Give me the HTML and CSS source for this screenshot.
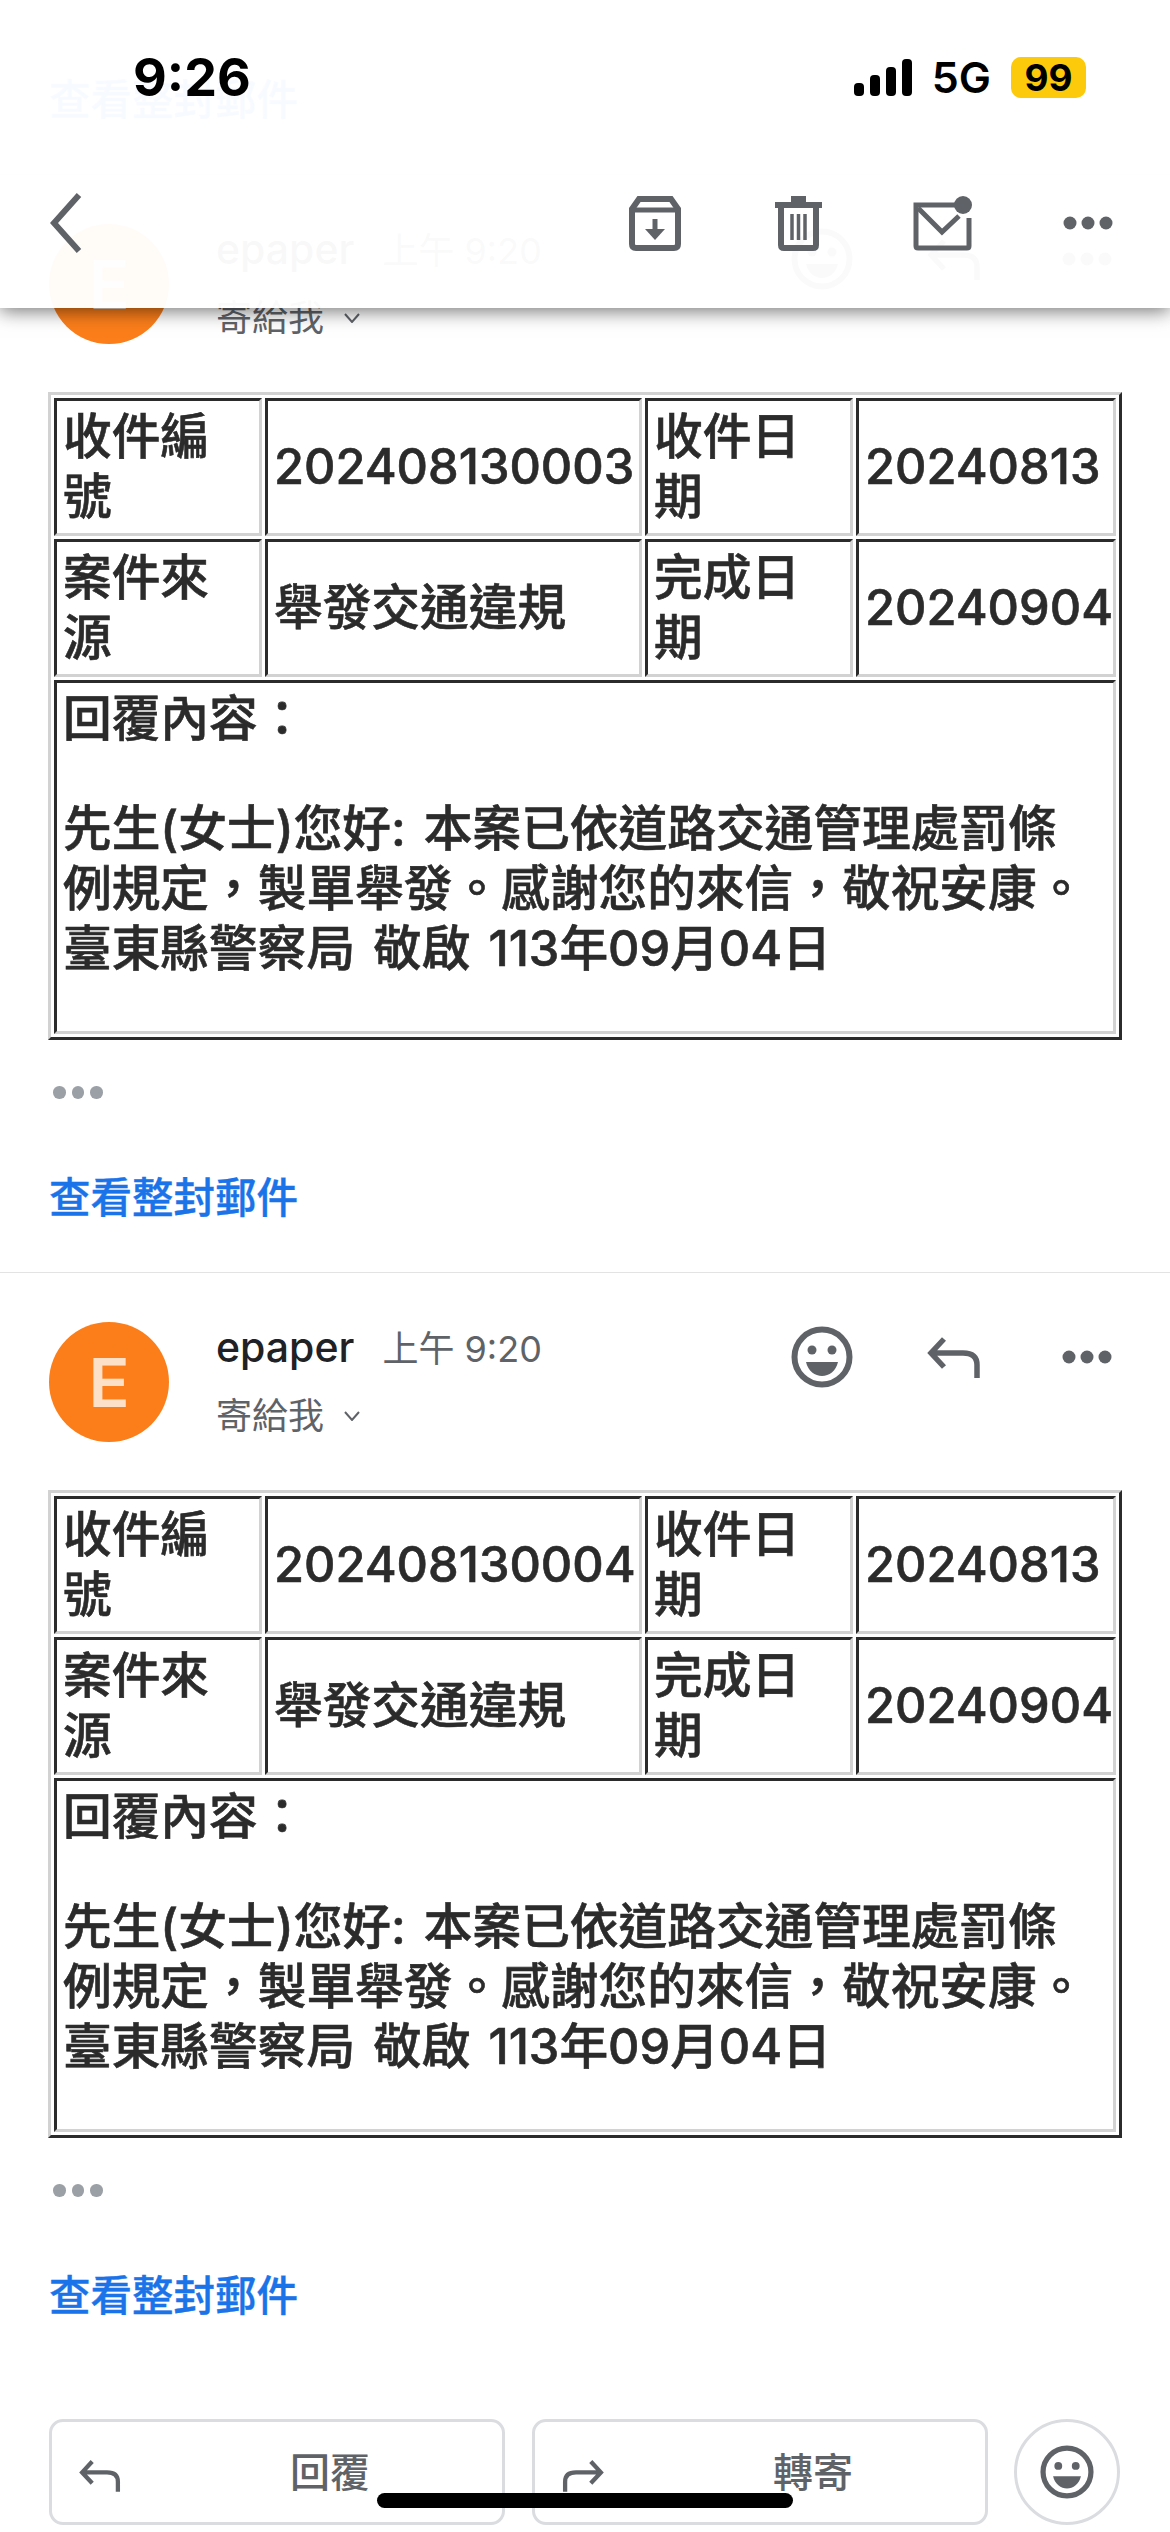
FILE: index.html
```html
<!DOCTYPE HTML>
<html lang="zh-Hant">
<head>
    <meta charset="UTF-8">
    <meta name="viewport" content="width=device-width, initial-scale=1.0">
    <title>epaper</title>
    <link rel="stylesheet" href="styles.css">
</head>
<body>

<svg class="iconDefs" width="0" height="0">
    <symbol id="iconSmile" viewBox="0 0 62 62">
        <circle cx="31" cy="31" r="27.5" fill="none" stroke="currentColor" stroke-width="6"/>
        <circle cx="21" cy="24" r="4.5" fill="currentColor"/>
        <circle cx="41" cy="24" r="4.5" fill="currentColor"/>
        <path d="M15 36H47C45 45 38 50 31 50C24 50 17 45 15 36Z" fill="currentColor"/>
    </symbol>
    <symbol id="iconReply" viewBox="0 0 54 42">
        <path d="M17 3L4 17L17 31M4 17H36Q50 17 50 29V42" fill="none" stroke="currentColor" stroke-width="5.5"/>
    </symbol>
    <symbol id="iconForward" viewBox="0 0 54 42">
        <path d="M37 3L50 17L37 31M50 17H18Q4 17 4 29V42" fill="none" stroke="currentColor" stroke-width="5.5"/>
    </symbol>
    <symbol id="iconMore" viewBox="0 0 50 14">
        <circle cx="7" cy="7" r="6.5" fill="currentColor"/>
        <circle cx="25" cy="7" r="6.5" fill="currentColor"/>
        <circle cx="43" cy="7" r="6.5" fill="currentColor"/>
    </symbol>
</svg>

<div class="feed">
    <a class="fullLink firstLink" href="javascript:;">查看整封郵件</a>

    <div class="message">
        <div class="msgHead">
            <div class="avatar">E</div>
            <div class="sender">
                <div class="senderLine"><span class="senderName">epaper</span><span class="sendTime">上午 9:20</span></div>
                <div class="toLine">寄給我<svg class="toArrow" viewBox="0 0 16 10"><path d="M1 1L8 9L15 1" fill="none" stroke="currentColor" stroke-width="2"/></svg></div>
            </div>
            <div class="msgActions">
                <svg class="iconSmile"><use href="#iconSmile"/></svg>
                <svg class="iconReply"><use href="#iconReply"/></svg>
                <svg class="iconMore"><use href="#iconMore"/></svg>
            </div>
        </div>
        <table class="caseTable">
            <colgroup><col class="colA"><col class="colB"><col class="colC"><col class="colD"></colgroup>
            <tr><td>收件編號</td><td>202408130003</td><td>收件日期</td><td>20240813</td></tr>
            <tr><td>案件來源</td><td>舉發交通違規</td><td>完成日期</td><td>20240904</td></tr>
            <tr><td colspan="4">回覆內容：
                <div class="gapLine"></div>
                先生(女士)您好: 本案已依道路交通管理處罰條<br>例規定，製單舉發。感謝您的來信，敬祝安康。<br>臺東縣警察局 敬啟 113年09月04日
                <div class="gapLine lastGap"></div>
            </td></tr>
        </table>
        <div class="quoteDots"><b></b><b></b><b></b></div>
        <a class="fullLink" href="javascript:;">查看整封郵件</a>
    </div>

    <div class="message">
        <div class="msgHead">
            <div class="avatar">E</div>
            <div class="sender">
                <div class="senderLine"><span class="senderName">epaper</span><span class="sendTime">上午 9:20</span></div>
                <div class="toLine">寄給我<svg class="toArrow" viewBox="0 0 16 10"><path d="M1 1L8 9L15 1" fill="none" stroke="currentColor" stroke-width="2"/></svg></div>
            </div>
            <div class="msgActions">
                <svg class="iconSmile"><use href="#iconSmile"/></svg>
                <svg class="iconReply"><use href="#iconReply"/></svg>
                <svg class="iconMore"><use href="#iconMore"/></svg>
            </div>
        </div>
        <table class="caseTable">
            <colgroup><col class="colA"><col class="colB"><col class="colC"><col class="colD"></colgroup>
            <tr><td>收件編號</td><td>202408130004</td><td>收件日期</td><td>20240813</td></tr>
            <tr><td>案件來源</td><td>舉發交通違規</td><td>完成日期</td><td>20240904</td></tr>
            <tr><td colspan="4">回覆內容：
                <div class="gapLine"></div>
                先生(女士)您好: 本案已依道路交通管理處罰條<br>例規定，製單舉發。感謝您的來信，敬祝安康。<br>臺東縣警察局 敬啟 113年09月04日
                <div class="gapLine lastGap"></div>
            </td></tr>
        </table>
        <div class="quoteDots"><b></b><b></b><b></b></div>
        <a class="fullLink" href="javascript:;">查看整封郵件</a>
    </div>

    <div class="bottomBtns">
        <div class="bottomBtn"><svg class="btnIcon"><use href="#iconReply"/></svg><span class="btnText">回覆</span></div>
        <div class="bottomBtn"><svg class="btnIcon"><use href="#iconForward"/></svg><span class="btnText">轉寄</span></div>
        <div class="bottomRound"><svg class="iconRound"><use href="#iconSmile"/></svg></div>
    </div>
</div>

<div class="topBar">
    <div class="statusBar">
        <span class="clock">9:26</span>
        <div class="statusRight">
            <svg class="signal" viewBox="0 0 58 37">
                <rect x="0" y="24" width="10" height="13" rx="4"/>
                <rect x="16" y="16" width="10" height="21" rx="4"/>
                <rect x="32" y="8" width="10" height="29" rx="4"/>
                <rect x="48" y="0" width="10" height="37" rx="4"/>
            </svg>
            <span class="netType">5G</span>
            <span class="battery">99</span>
        </div>
    </div>
    <div class="toolBar">
        <svg class="iconBack" viewBox="0 0 32 60"><path d="M29 2L4 30L29 58" fill="none" stroke="currentColor" stroke-width="6"/></svg>
        <div class="toolIcons">
            <svg class="iconArchive" viewBox="0 0 52 55">
                <path d="M10 3H42L49 13V48Q49 52 45 52H7Q3 52 3 48V13Z" fill="none" stroke="currentColor" stroke-width="6"/>
                <path d="M3 14H49" stroke="currentColor" stroke-width="5"/>
                <path d="M26 23V37" stroke="currentColor" stroke-width="5"/>
                <path d="M16 33H36L26 44Z" fill="currentColor"/>
            </svg>
            <svg class="iconTrash" viewBox="0 0 47 55">
                <path d="M0 6H47V12H0ZM16 0H31V6H16Z" fill="currentColor"/>
                <path d="M6 12V49Q6 52 9 52H38Q41 52 41 49V12" fill="none" stroke="currentColor" stroke-width="6"/>
                <path d="M17 18V44M23.500 18V44M30 18V44" stroke="currentColor" stroke-width="3.500"/>
            </svg>
            <svg class="iconMail" viewBox="0 0 59 55">
                <path d="M42 9H3V50Q3 52 5 52H54Q56 52 56 50V22" fill="none" stroke="currentColor" stroke-width="5"/>
                <path d="M5 12L29 36L46 20" fill="none" stroke="currentColor" stroke-width="5"/>
                <circle cx="50" cy="9" r="9" fill="currentColor"/>
            </svg>
            <svg class="iconMore"><use href="#iconMore"/></svg>
        </div>
    </div>
</div>

<div class="homeBar"></div>

</body>
</html>
```

FILE: styles.css
```css
html, body {
    margin: 0;
    padding: 0;
}
body {
    position: relative;
    width: 1170px;
    height: 2532px;
    overflow: hidden;
    background: #fff;
    font-family: Inter, "Noto Sans CJK TC", sans-serif;
    color: #2b2b2b;
}
.iconDefs {
    position: absolute;
}
.feed {
    display: flex;
    flex-direction: column;
}
.fullLink {
    display: block;
    margin-left: 49px;
    height: 60px;
    font-size: 41.5px;
    line-height: 60px;
    font-weight: 500;
    -webkit-text-stroke: .4px #1a73e8;
    color: #1a73e8;
    text-decoration: none;
}
.firstLink {
    margin-top: 70px;
}
.message {
    margin-top: 44px;
    padding-top: 49px;
    border-top: 1px solid #e3e3e3;
}
.msgHead {
    display: flex;
    align-items: flex-start;
    height: 120px;
    padding: 0 58px 0 49px;
}
.avatar {
    width: 120px;
    height: 120px;
    flex: none;
    border-radius: 50%;
    background: #fb7e1a;
    color: #fde0c8;
    font-size: 68px;
    line-height: 120px;
    font-weight: 600;
    text-align: center;
}
.sender {
    flex: 1;
    margin-left: 47px;
}
.senderLine {
    display: flex;
    align-items: baseline;
    height: 50px;
    line-height: 50px;
}
.senderName {
    font-size: 41px;
    font-weight: 500;
    color: #202124;
}
.sendTime {
    margin-left: 28px;
    font-size: 36px;
    color: #5f6368;
}
.toLine {
    display: flex;
    align-items: center;
    height: 50px;
    margin-top: 19px;
    font-size: 36px;
    line-height: 50px;
    color: #5f6368;
}
.toArrow {
    width: 16px;
    height: 10px;
    margin-left: 20px;
}
.msgActions {
    display: flex;
    align-items: center;
    height: 70px;
    color: #5f6368;
}
.iconSmile {
    width: 62px;
    height: 62px;
}
.iconReply {
    width: 54px;
    height: 42px;
    margin-left: 74px;
}
.iconMore {
    width: 50px;
    height: 14px;
    margin-left: 81px;
}
.caseTable {
    width: 1074px;
    margin: 48px 0 0 48px;
    table-layout: fixed;
    border-collapse: separate;
    border-spacing: 3px;
    border: 3px solid;
    border-color: #d2d2d2 #2b2b2b #2b2b2b #d2d2d2;
    font-size: 48.7px;
    line-height: 60px;
    font-weight: 500;
    word-spacing: 5px;
    -webkit-text-stroke: .6px #2b2b2b;
    color: #2b2b2b;
}
.colA { width: 208px; }
.colB { width: 377px; }
.colC { width: 208px; }
.colD { width: 260px; }
.caseTable td {
    padding: 6px;
    border: 3px solid;
    border-color: #2b2b2b #d2d2d2 #d2d2d2 #2b2b2b;
    overflow: hidden;
}
.gapLine {
    height: 50px;
}
.lastGap {
    height: 46px;
}
.quoteDots {
    display: flex;
    gap: 6px;
    margin: 46px 0 0 53px;
    height: 12px;
}
.quoteDots b {
    width: 12.500px;
    height: 12.500px;
    border-radius: 50%;
    background: #9aa0a6;
}
.quoteDots + .fullLink {
    margin-top: 70px;
}
.bottomBtns {
    display: flex;
    margin: 93px 49px 0 49px;
    height: 106px;
    color: #5f6368;
}
.bottomBtn {
    position: relative;
    box-sizing: border-box;
    width: 456px;
    margin-right: 27px;
    padding: 0 0 4px 106px;
    display: flex;
    align-items: center;
    justify-content: center;
    border: 3px solid #dadce0;
    border-radius: 14px;
}
.btnIcon {
    position: absolute;
    left: 27px;
    top: 37px;
    width: 42px;
    height: 33px;
}
.btnText {
    font-size: 40px;
    font-weight: 500;
}
.bottomRound {
    box-sizing: border-box;
    width: 106px;
    height: 106px;
    margin-left: -1px;
    display: flex;
    align-items: center;
    justify-content: center;
    border: 3px solid #dadce0;
    border-radius: 50%;
}
.iconRound {
    width: 54px;
    height: 54px;
}
.topBar {
    position: absolute;
    left: 0;
    top: 0;
    width: 1170px;
    height: 308px;
    background: rgba(255,255,255,.97);
    box-shadow: 0 3px 18px rgba(0,0,0,.55);
}
.statusBar {
    display: flex;
    justify-content: space-between;
    align-items: center;
    height: 41px;
    padding: 57px 84px 0 133px;
    color: #000;
}
.clock {
    font-size: 52px;
    font-weight: 700;
    line-height: 41px;
}
.statusRight {
    display: flex;
    align-items: center;
}
.signal {
    width: 58px;
    height: 37px;
    fill: #000;
}
.netType {
    margin-left: 20px;
    font-size: 43px;
    font-weight: 600;
    line-height: 41px;
}
.battery {
    width: 75px;
    height: 41px;
    margin-left: 20px;
    border-radius: 10px;
    background: #fcc90b;
    font-size: 37px;
    font-weight: 700;
    line-height: 41px;
    text-align: center;
    color: #000;
}
.toolBar {
    display: flex;
    justify-content: space-between;
    align-items: center;
    height: 64px;
    margin-top: 93px;
    padding: 0 57px 0 50px;
    color: #5f6368;
}
.iconBack {
    width: 32px;
    height: 60px;
}
.toolIcons {
    display: flex;
    align-items: center;
}
.iconArchive {
    width: 52px;
    height: 55px;
}
.iconTrash {
    width: 47px;
    height: 55px;
    margin-left: 94px;
}
.iconMail {
    width: 59px;
    height: 55px;
    margin-left: 91px;
}
.toolIcons .iconMore {
    margin-left: 91px;
}
.homeBar {
    position: absolute;
    left: 377px;
    top: 2493px;
    width: 416px;
    height: 15px;
    border-radius: 8px;
    background: #000;
}
```
